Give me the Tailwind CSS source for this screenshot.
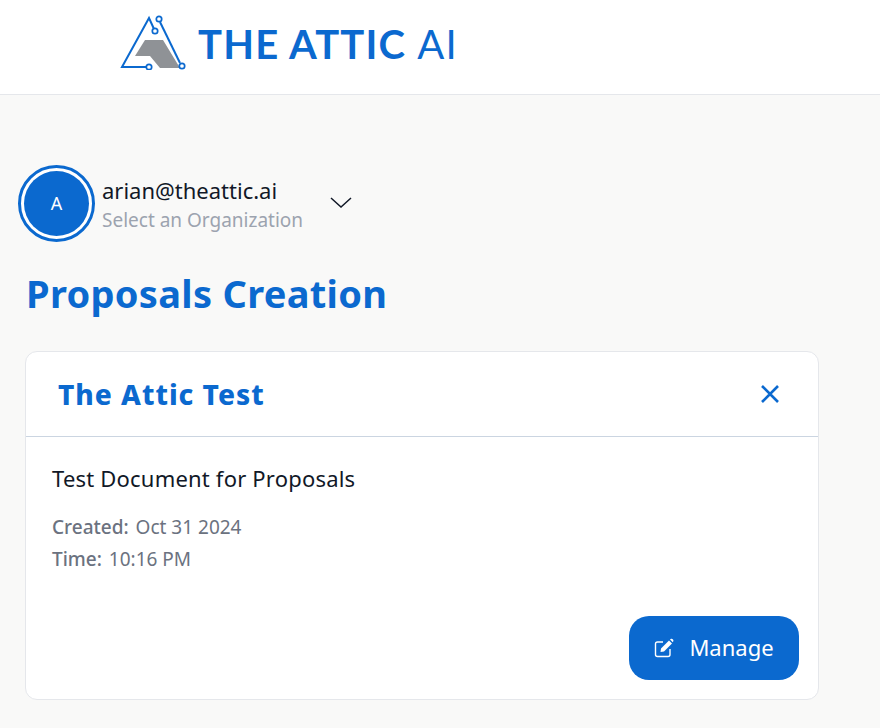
<!DOCTYPE html>
<html>
<head>
<meta charset="utf-8">
<script src="https://cdn.jsdelivr.net/npm/@tailwindcss/browser@4"></script>
</head>
<body class="m-0 h-[728px] w-[880px] overflow-hidden bg-[#f9f9f8] font-['Noto_Sans',sans-serif]">
<header class="flex h-[95px] items-start border-b border-[#e5e7eb] bg-white pl-[120px] pt-[14px]">
  <svg class="h-[56px] w-[70px] shrink-0" viewBox="0 0 70 56" fill="none">
    <path d="M15 42 L25 26 H43 L60 54 H40 L30 42 Z" fill="#8f9296"/>
    <path d="M34 15 L29 4 L2 53 H26" stroke="#0b69cf" stroke-width="2"/>
    <path d="M40 8 L60 49" stroke="#0b69cf" stroke-width="2"/>
    <circle cx="35" cy="17" r="2.7" fill="#fff" stroke="#0b69cf" stroke-width="1.7"/>
    <circle cx="39" cy="5" r="2.7" fill="#fff" stroke="#0b69cf" stroke-width="1.7"/>
    <circle cx="29" cy="53" r="2.7" fill="#fff" stroke="#0b69cf" stroke-width="1.7"/>
    <circle cx="62" cy="52" r="2.7" fill="#fff" stroke="#0b69cf" stroke-width="1.7"/>
  </svg>
  <div class="ml-[8px] mt-[5px] whitespace-nowrap font-['Lato',sans-serif] text-[40px] font-bold leading-[50px] tracking-[1.2px] text-[#0b69cf]">THE ATTIC <span class="font-normal">AI</span></div>
</header>
<main class="pl-[18px] pt-[70px]">
  <div class="flex items-center">
    <div class="flex h-[77px] w-[77px] shrink-0 items-center justify-center rounded-full border-[3px] border-[#0b69cf] bg-white">
      <div class="flex h-[65px] w-[65px] items-center justify-center rounded-full bg-[#0b69cf] text-[18px] text-white">A</div>
    </div>
    <div class="ml-[7px] mt-[4px]">
      <div class="text-[22px] leading-[28px] text-[#111827]">arian@theattic.ai</div>
      <div class="mt-[2px] text-[19px] leading-[29px] text-[#9ca3af]">Select an Organization</div>
    </div>
    <svg class="ml-[26px] mt-[-1px] h-[24px] w-[24px]" viewBox="0 0 24 24" fill="none" stroke="#111827" stroke-width="1.5"><path d="M2 7 L12 16 L22 7"/></svg>
  </div>
  <h1 class="ml-[8px] mt-[29px] text-[38px] font-bold leading-[44px] tracking-[0.3px] text-[#0b69cf]">Proposals Creation</h1>
  <section class="ml-[7px] mt-[36px] h-[349px] w-[794px] rounded-[12px] border border-[#e5e7eb] bg-white">
    <div class="flex h-[85px] items-center justify-between border-b border-[#cbd5e1] pl-[32px] pr-[36px]">
      <h2 class="text-[28px] font-extrabold tracking-[1px] text-[#0b69cf]">The Attic Test</h2>
      <svg class="h-[24px] w-[24px]" viewBox="0 0 24 24" fill="none" stroke="#0b69cf" stroke-width="2.6"><path d="M4 4 L20 20 M20 4 L4 20"/></svg>
    </div>
    <div class="px-[26px] pt-[25px]">
      <p class="text-[22px] leading-[32px] tracking-[0.2px] text-[#111827]">Test Document for Proposals</p>
      <p class="mt-[17px] text-[19px] leading-[32px] text-[#6b7280]"><span class="mr-[2px] font-medium">Created:</span> Oct 31 2024</p>
      <p class="text-[19px] leading-[32px] text-[#6b7280]"><span class="mr-[2px] font-medium">Time:</span> 10:16 PM</p>
      <div class="mt-[41px] flex justify-end">
        <button class="mr-[-7px] flex h-[64px] w-[170px] items-center justify-center gap-[15px] rounded-[20px] bg-[#0b69cf] text-[22px] leading-[30px] text-white">
          <svg class="h-[20px] w-[20px]" viewBox="0 0 20 20" fill="none"><path d="M9 4 H3.5 Q1.5 4 1.5 6 V16.5 Q1.5 18.500 3.500 18.500 H14 Q16 18.500 16 16.500 V11" stroke="#fff" stroke-width="1.4"/><path d="M7 10.500 L15 2.500 L18 5.500 L10 13.500 L6.500 14 Z M16 1.500 L17 0.800 Q18 0.500 19 1.500 Q19.800 2.500 19.200 3.500 L18.800 4.300 Z" fill="#fff"/></svg>
          <span class="mt-[-2px]">Manage</span>
        </button>
      </div>
    </div>
  </section>
</main>
</body>
</html>
